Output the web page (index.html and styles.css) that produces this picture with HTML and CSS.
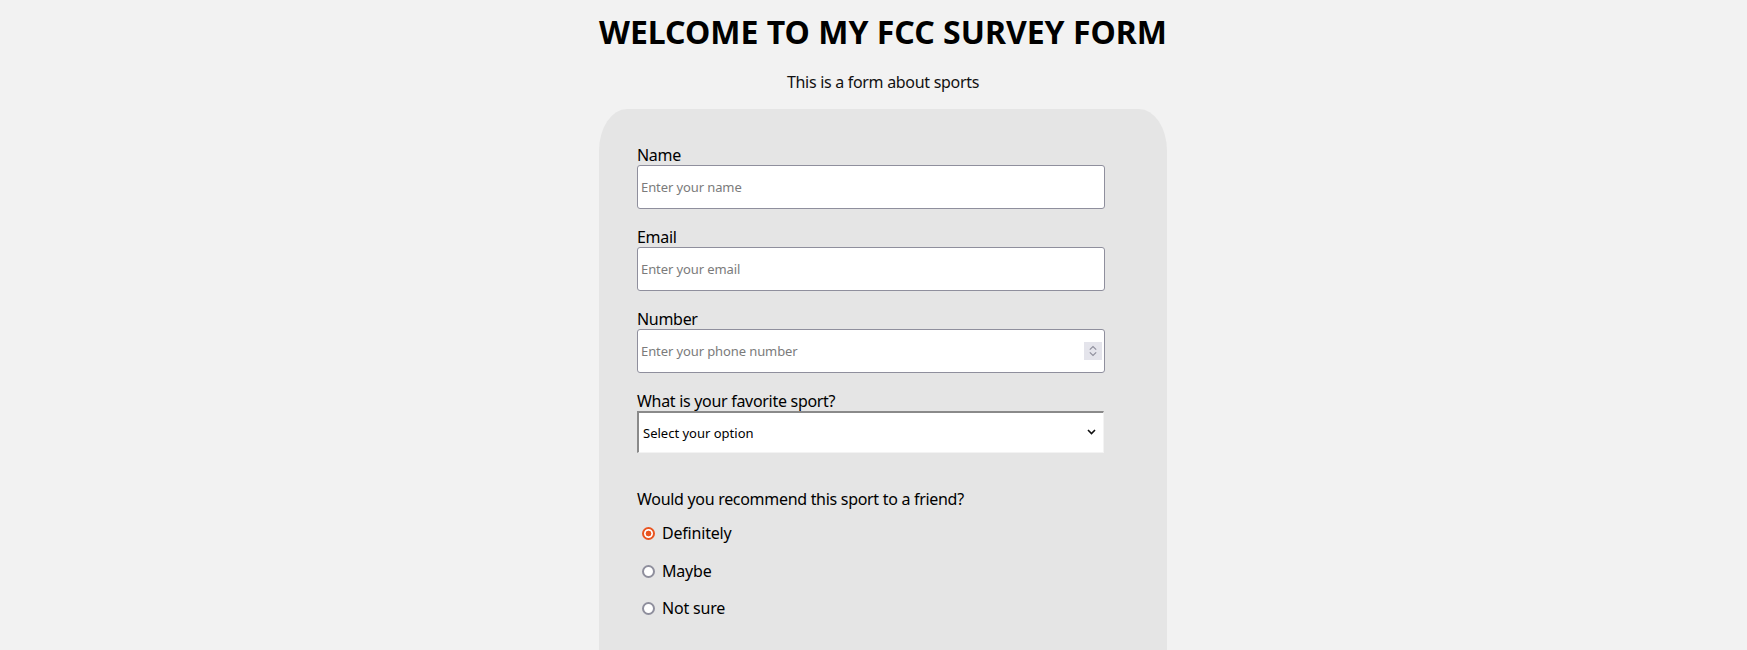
FILE: index.html
```html
<!DOCTYPE html>
<html lang="en">
<head>
<meta charset="utf-8">
<title>FCC Survey Form</title>
<link rel="stylesheet" href="styles.css">
</head>
<body>
<main class="page">
  <h1 id="title" class="title">WELCOME TO MY FCC SURVEY FORM</h1>
  <p id="description" class="subtitle">This is a form about sports</p>
  <form id="survey-form" class="card">
    <div class="field">
      <label for="name" class="field-label">Name</label>
      <input id="name" class="text-input" type="text" placeholder="Enter your name">
    </div>
    <div class="field">
      <label for="email" class="field-label">Email</label>
      <input id="email" class="text-input" type="email" placeholder="Enter your email">
    </div>
    <div class="field">
      <label for="number" class="field-label">Number</label>
      <div class="input-wrap">
        <input id="number" class="text-input" type="text" placeholder="Enter your phone number">
        <span class="spinner" aria-hidden="true">
          <svg width="18" height="18" viewBox="0 0 18 18"><path d="M5.8 7.6 L9 4.6 L12.2 7.6" fill="none" stroke="#8f8f9d" stroke-width="1.2"/><path d="M5.8 10.4 L9 13.4 L12.2 10.4" fill="none" stroke="#8f8f9d" stroke-width="1.2"/></svg>
        </span>
      </div>
    </div>
    <div class="field">
      <label for="dropdown" class="field-label">What is your favorite sport?</label>
      <div class="select-wrap">
        <select id="dropdown" class="select">
          <option>Select your option</option>
          <option>Football</option>
          <option>Basketball</option>
          <option>Tennis</option>
        </select>
        <svg class="chevron" width="9" height="6" viewBox="0 0 9 6" aria-hidden="true"><path d="M1 1 L4.5 4.5 L8 1" fill="none" stroke="#111" stroke-width="1.6"/></svg>
      </div>
    </div>
    <div class="radio-group">
      <p class="question">Would you recommend this sport to a friend?</p>
      <label class="radio-row"><input class="radio" type="radio" name="recommend" value="definitely" checked> Definitely</label>
      <label class="radio-row"><input class="radio" type="radio" name="recommend" value="maybe"> Maybe</label>
      <label class="radio-row"><input class="radio" type="radio" name="recommend" value="not-sure"> Not sure</label>
    </div>
  </form>
</main>
</body>
</html>
```

FILE: styles.css
```css
* {
  box-sizing: border-box;
}

html, body {
  background: #f2f2f2;
}

body {
  margin: 0;
  padding-left: 19px;
  font-family: "Noto Sans", "Open Sans", sans-serif;
  color: #111;
}

.page {
  width: 568px;
  margin: 0 auto;
}

.title {
  margin: 13px 0 0;
  font-size: 32px;
  line-height: 38px;
  font-weight: 700;
  text-align: center;
  white-space: nowrap;
  color: #000;
}

.subtitle {
  margin: 22px 0 0;
  font-size: 16px;
  line-height: 19px;
  letter-spacing: -0.3px;
  text-align: center;
}

.card {
  margin-top: 17px;
  background: #e5e5e5;
  border-radius: 28px 28px 0 0 / 42px 42px 0 0;
  padding: 37px 38px 0;
  min-height: 700px;
}

.field {
  display: flex;
  flex-direction: column;
  align-items: flex-start;
  margin-bottom: 19.5px;
}

.field-label {
  display: block;
  font-size: 16px;
  line-height: 19px;
  letter-spacing: -0.3px;
  color: #000;
}

.text-input {
  width: 468px;
  height: 43.5px;
  margin: 0;
  padding: 0 3px;
  border: 1px solid #8f8f9d;
  border-radius: 3px;
  background: #fff;
  font-family: "Noto Sans", "Open Sans", sans-serif;
  font-size: 13px;
  letter-spacing: -0.1px;
  color: #111;
  outline: none;
}

.text-input::placeholder {
  color: #7b7b7b;
}

.input-wrap,
.select-wrap {
  position: relative;
  width: 468px;
}

.spinner {
  position: absolute;
  right: 3px;
  top: 13px;
  width: 18px;
  height: 18px;
  background: #e4e4eb;
  display: flex;
}

.select {
  appearance: none;
  -webkit-appearance: none;
  width: 467px;
  height: 42px;
  margin: 0;
  padding: 0 4px;
  border-style: solid;
  border-width: 2px 1px 1px 2px;
  border-color: #8a8a8a #f3f3f3 #f3f3f3 #8a8a8a;
  border-radius: 0;
  background: #fff;
  font-family: "Noto Sans", "Open Sans", sans-serif;
  font-size: 13px;
  color: #000;
  outline: none;
}

.chevron {
  position: absolute;
  right: 9px;
  top: 18px;
  pointer-events: none;
}

.radio-group {
  display: flex;
  flex-direction: column;
  gap: 18.5px;
  padding-top: 17px;
}

.question {
  margin: 0 0 -2.6px;
  font-size: 16px;
  line-height: 19px;
  letter-spacing: -0.3px;
  color: #000;
}

.radio-row {
  display: flex;
  align-items: center;
  gap: 7px;
  font-size: 16px;
  line-height: 19px;
  letter-spacing: -0.2px;
  color: #000;
  padding-left: 5px;
}

.radio {
  appearance: none;
  -webkit-appearance: none;
  width: 13px;
  height: 13px;
  margin: 0;
  border: 2px solid #8f8f9d;
  border-radius: 50%;
  background: #fff;
  flex: none;
}

.radio:checked {
  border-color: #e95420;
  background: radial-gradient(circle, #e95420 0 2.6px, #fff 3.2px);
}
```
